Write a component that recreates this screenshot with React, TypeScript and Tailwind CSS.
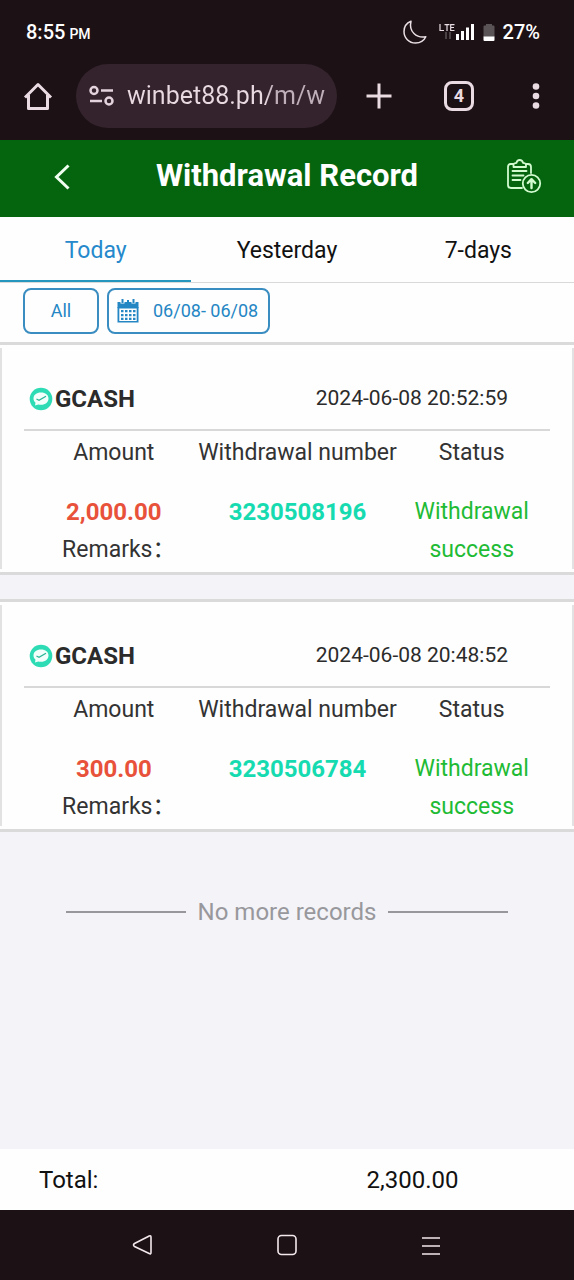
import { useState } from "react";
import type { ReactNode } from "react";

interface WithdrawalRecord {
  id: string;
  channel: string;
  createdAt: string;
  amount: number;
  status: string;
  remarks: string;
}

const TABS = ["Today", "Yesterday", "7-days"];

const RECORDS: WithdrawalRecord[] = [
  {
    id: "3230508196",
    channel: "GCASH",
    createdAt: "2024-06-08 20:52:59",
    amount: 2000,
    status: "Withdrawal success",
    remarks: "",
  },
  {
    id: "3230506784",
    channel: "GCASH",
    createdAt: "2024-06-08 20:48:52",
    amount: 300,
    status: "Withdrawal success",
    remarks: "",
  },
];

function formatMoney(value: number) {
  return value.toLocaleString("en-US", { minimumFractionDigits: 2 });
}

function StatusBar() {
  return (
    <div className="flex h-16 items-center justify-between pl-[26px] pr-[34px] text-white">
      <div className="flex items-baseline gap-1 text-xl font-medium">
        8:55 <span className="text-sm">PM</span>
      </div>
      <div className="flex items-center text-xl font-medium">
        {/* do not disturb */}
        <svg width="24" height="24" viewBox="0 0 24 24" fill="none" stroke="#eadfe4" strokeWidth="1.5" strokeLinejoin="round">
          <path d="M8 1.2C3.5 3 1 7 1 11.5 1 18 6 23 12.5 23c4.500 0 8.500-2.300 10.300-6.200C13.500 18.500 5.500 11.500 8 1.200z" />
        </svg>
        <svg className="ml-3" width="35" height="20" viewBox="0 0 35 20">
          <path d="M1 2v6.500h4M5.500 2.600h5M8 2.600v6.400M15.500 2.600h-3.800v5.900h3.800M11.700 5.500h3.300" fill="none" stroke="#eadfe4" strokeWidth="1.2" />
          <path d="M7 10v7M11 10v7" stroke="#4a4145" strokeWidth="2" />
          <path d="M17 12h3v6h-3zM22 9h3v9h-3zM27 5.500h3v12.500h-3zM32 2h3v16h-3z" fill="#fff" />
        </svg>
        <svg className="ml-[9px] mr-2" width="12" height="20" viewBox="0 0 12 20">
          <path d="M3 2h6v1.500h1.500q1 0 1 1V15H.5V4.500q0-1 1-1H3z" fill="#5b5457" />
          <path d="M.5 14.500h11V18q0 1-1 1h-9q-1 0-1-1z" fill="#fff" />
        </svg>
        27%
      </div>
    </div>
  );
}

function BrowserBar() {
  const [url, setUrl] = useState("winbet88.ph/m/w");

  return (
    <div className="flex items-center justify-between pb-3 pl-[22px] pr-[22px]">
      <button type="button" aria-label="Home">
        <svg width="32" height="32" viewBox="0 0 32 32" fill="none" stroke="#eadbe2" strokeWidth="3" strokeLinejoin="round">
          <path d="M3 17.500L16 4.500l13 13M6.500 15v13.500h19V15" />
        </svg>
      </button>
      <div className="ml-[22px] flex h-16 w-0 grow items-center gap-3 rounded-full bg-[#34232c] pl-3 pr-3">
        <button type="button" aria-label="Site settings">
          <svg width="27" height="22" viewBox="0 0 27 22" fill="none" stroke="#e4d3dc" strokeWidth="2.5">
            <circle cx="6" cy="5.500" r="3.500" />
            <path d="M13 5.500h12M2 16h12" />
            <circle cx="21" cy="16" r="3.500" />
          </svg>
        </button>
        <input
          type="text"
          aria-label="Address"
          value={url}
          onChange={(e) => setUrl(e.target.value)}
          className="w-0 grow bg-linear-to-r from-[#e8d8e0] from-70% to-[#bfafb8] to-74% bg-clip-text text-[25px] text-transparent outline-none"
        />
      </div>
      <button type="button" aria-label="New tab" className="ml-7">
        <svg width="28" height="28" viewBox="0 0 28 28" stroke="#eadbe2" strokeWidth="3">
          <path d="M14 1.500v25M1.500 14h25" />
        </svg>
      </button>
      <button
        type="button"
        aria-label="Switch tabs"
        className="ml-[51px] size-[30px] rounded-lg border-3 border-[#eadbe2] text-lg/6 font-bold text-[#eadbe2]"
      >
        4
      </button>
      <button type="button" aria-label="Menu" className="ml-[46px]">
        <svg width="32" height="28" viewBox="0 0 32 28" fill="#eadbe2">
          <circle cx="16" cy="4.500" r="3.300" />
          <circle cx="16" cy="14" r="3.300" />
          <circle cx="16" cy="23.500" r="3.300" />
        </svg>
      </button>
    </div>
  );
}

function PageHeader() {
  return (
    <header className="grid h-[77px] grid-cols-[124px_1fr_124px] items-center bg-[#05650f] pb-1 text-white">
      <button type="button" aria-label="Back" className="justify-self-center">
        <svg width="18" height="28" viewBox="0 0 18 28" fill="none" stroke="#f0fff0" strokeWidth="3">
          <path d="M15.500 2.500L3.500 14l12 11.500" />
        </svg>
      </button>
      <h1 className="text-center text-[31px] font-bold whitespace-nowrap">Withdrawal Record</h1>
      <button type="button" aria-label="Withdraw" className="ml-6 justify-self-center">
        <svg width="36" height="36" viewBox="0 0 36 36" fill="none" stroke="#d2fbd0" strokeWidth="1.800" strokeLinecap="round" strokeLinejoin="round">
          <path d="M7 5H4.500Q2 5 2 8v18q0 3 3 3h11M20 5h2q3 0 3 3v6" />
          <path d="M7.500 8V5.500q0-1 1-1.200l2-.5Q11 1 13.700 1t3.300 2.800l2 .5q1 .2 1 1.200V8z" />
          <path d="M6.500 12h14M6.500 16.500h11M6.500 21h8" />
          <circle cx="25.500" cy="24.500" r="8.700" />
          <path d="M25.500 29v-8.500M21.800 24l3.700-3.800 3.700 3.800" strokeWidth="2.400" />
        </svg>
      </button>
    </header>
  );
}

function CalendarIcon() {
  return (
    <svg width="22" height="24" viewBox="0 0 22 24" fill="#2586c4">
      <path d="M.5 3h3v1.500h4V3h7v1.500h4V3h3v6H.5z" />
      <path d="M4.500 0h2v4h-2zM10 1h2v4h-2zM15.500 0h2v4h-2z" />
      <path fillRule="evenodd" d="M.5 8h21v15.500H.5zM2.300 9.500v12.500h17.400V9.500z" />
      <path d="M4 11h2.500v2.200H4zM8 11h2.500v2.200H8zM12 11h2.500v2.200H12zM16 11h2.500v2.200H16zM4 15h2.500v2.200H4zM8 15h2.500v2.200H8zM12 15h2.500v2.200H12zM16 15h2.500v2.200H16zM4 18.800h2.500V21H4zM8 18.800h2.500V21H8zM12 18.800h2.500V21H12zM16 18.800h2.500V21H16z" />
    </svg>
  );
}

function ChannelIcon() {
  return (
    <svg width="24" height="24" viewBox="0 0 24 24">
      <circle cx="12" cy="12" r="11.300" fill="#2ddcb4" />
      <path d="M12 5.500c4.500 0 7.500 2.500 7.500 6s-3 6.300-7.500 6.300q-1.500 0-2.800-.4L6 18.500l.5-2.800C5.200 14.700 4.500 13.200 4.500 11.500c0-3.500 3-6 7.500-6z" fill="#f2fffb" />
      <path d="M7.500 12l2.500 1.300 7-4" fill="none" stroke="#2ab596" strokeWidth="1.300" />
    </svg>
  );
}

function RecordCard({ record }: { record: WithdrawalRecord }) {
  return (
    <article className="border-y-3 border-[#dadada] bg-[#fefefe]">
      <div className="my-[3px] border-x-2 border-[#e2e2e2] px-[22px]">
        <div className="flex h-[83px] items-center justify-between border-b-2 border-[#d8d8d8] pt-5 pr-[42px] pl-[5px] text-[#2b2b2b]">
          <div className="flex items-center gap-0.5">
            <ChannelIcon />
            <h2 className="text-2xl font-bold">{record.channel}</h2>
          </div>
          <time className="text-[21px]">{record.createdAt}</time>
        </div>
        <table className="w-full table-fixed text-center text-[23px] text-[#333]">
          <colgroup>
            <col className="w-[33%]" />
            <col className="w-[38%]" />
            <col className="w-[29%]" />
          </colgroup>
          <thead>
            <tr className="h-[62px] align-top leading-[44px] whitespace-nowrap">
              <th className="pl-1.5 font-normal">Amount</th>
              <th className="font-normal">Withdrawal number</th>
              <th className="pr-1 font-normal">Status</th>
            </tr>
          </thead>
          <tbody className="align-top leading-[38px]">
            <tr>
              <td className="pl-1.5 text-2xl/[38px] font-bold text-[#e8513a]">{formatMoney(record.amount)}</td>
              <td className="text-2xl/[38px] font-bold text-[#16dbb0]">{record.id}</td>
              <td rowSpan={2} className="pr-5 pl-4 text-[#1fbb35]">
                {record.status}
              </td>
            </tr>
            <tr>
              <td className="pl-4">Remarks：{record.remarks}</td>
              <td />
            </tr>
          </tbody>
        </table>
      </div>
    </article>
  );
}

function NavButton({ label, children }: { label: string; children: ReactNode }) {
  return (
    <button type="button" aria-label={label}>
      <svg width="24" height="24" viewBox="0 0 24 24" fill="none" stroke="#f3e8ec" strokeWidth="1.600" strokeLinejoin="round">
        {children}
      </svg>
    </button>
  );
}

export default function App() {
  const [activeTab, setActiveTab] = useState("Today");
  const total = RECORDS.reduce((sum, r) => sum + r.amount, 0);

  return (
    <div className="flex min-h-screen flex-col bg-[#f3f3f8] font-[Roboto,'Noto_Sans_CJK_SC',sans-serif]">
      <div className="bg-[#1c1115]">
        <StatusBar />
        <BrowserBar />
      </div>

      <PageHeader />

      <div className="bg-[#fefefe]">
        <div role="tablist" className="grid grid-cols-3 border-b border-[#d9d9d9]">
          {TABS.map((tab) => (
            <button
              key={tab}
              type="button"
              role="tab"
              aria-selected={activeTab === tab}
              onClick={() => setActiveTab(tab)}
              className={`h-[65px] border-b-2 pt-1.5 text-[23px] ${
                activeTab === tab ? "border-[#2596be] text-[#2589cc]" : "border-transparent text-[#111]"
              }`}
            >
              {tab}
            </button>
          ))}
        </div>

        <div className="flex gap-2 px-[23px] pt-[5px] pb-2 text-lg text-[#2586c4]">
          <button type="button" className="h-[46px] w-[76px] rounded-lg border-2 border-[#3a8dc0]">
            All
          </button>
          <button type="button" className="flex h-[46px] items-center gap-3.5 rounded-lg border-2 border-[#3a8dc0] pr-2.5 pl-2">
            <CalendarIcon />
            06/08- 06/08
          </button>
        </div>
      </div>

      <main className="flex grow flex-col gap-6">
        {RECORDS.map((record) => (
          <RecordCard key={record.id} record={record} />
        ))}

        <div className="mt-10 flex items-center justify-center gap-3 px-[66px] text-2xl text-[#98989c]">
          <span className="h-0.5 grow bg-[#98989c]" />
          No more records
          <span className="h-0.5 grow bg-[#98989c]" />
        </div>
      </main>

      <footer className="grid h-[61px] grid-cols-[1fr_1fr] items-center bg-[#fefefe] text-2xl text-[#111]">
        <span className="pl-[39px]">Total:</span>
        <span className="pr-9 text-center">{formatMoney(total)}</span>
      </footer>

      <nav className="flex h-[70px] items-center justify-center gap-[120px] bg-[#1c1115]">
        <NavButton label="Back">
          <path d="M20 4.500v15q0 2-1.800 1L3.500 13.500q-2-1.500 0-3L18.200 3q1.800-.8 1.800 1.500z" />
        </NavButton>
        <NavButton label="Home">
          <rect x="3" y="2.500" width="18" height="19" rx="3.500" />
        </NavButton>
        <NavButton label="Recent apps">
          <path d="M3 5h18M3 13h18M3 21h18" />
        </NavButton>
      </nav>
    </div>
  );
}
